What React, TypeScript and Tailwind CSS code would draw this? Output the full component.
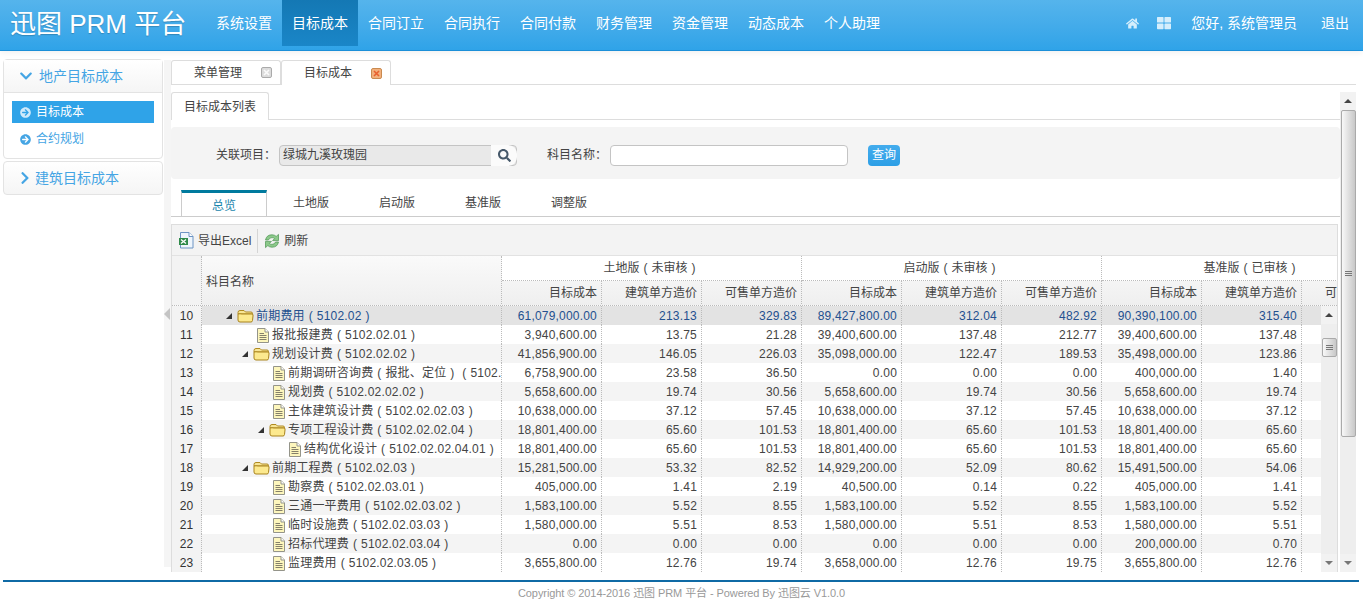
import { FaHome, FaThLarge, FaChevronDown, FaChevronRight, FaArrowCircleRight, FaSearch } from "react-icons/fa";

const font = { fontFamily: '"Liberation Sans", "Noto Sans CJK SC", sans-serif' };

type Row = { n: number; name: string; note?: string; code: string; level: number; folder?: boolean; v: string[] };

const rows: Row[] = [
  { n: 10, name: "前期费用", code: "5102.02", level: 0, folder: true, v: ["61,079,000.00", "213.13", "329.83", "89,427,800.00", "312.04", "482.92", "90,390,100.00", "315.40"] },
  { n: 11, name: "报批报建费", code: "5102.02.01", level: 1, v: ["3,940,600.00", "13.75", "21.28", "39,400,600.00", "137.48", "212.77", "39,400,600.00", "137.48"] },
  { n: 12, name: "规划设计费", code: "5102.02.02", level: 1, folder: true, v: ["41,856,900.00", "146.05", "226.03", "35,098,000.00", "122.47", "189.53", "35,498,000.00", "123.86"] },
  { n: 13, name: "前期调研咨询费", note: "报批、定位", code: "5102.02.02.01", level: 2, v: ["6,758,900.00", "23.58", "36.50", "0.00", "0.00", "0.00", "400,000.00", "1.40"] },
  { n: 14, name: "规划费", code: "5102.02.02.02", level: 2, v: ["5,658,600.00", "19.74", "30.56", "5,658,600.00", "19.74", "30.56", "5,658,600.00", "19.74"] },
  { n: 15, name: "主体建筑设计费", code: "5102.02.02.03", level: 2, v: ["10,638,000.00", "37.12", "57.45", "10,638,000.00", "37.12", "57.45", "10,638,000.00", "37.12"] },
  { n: 16, name: "专项工程设计费", code: "5102.02.02.04", level: 2, folder: true, v: ["18,801,400.00", "65.60", "101.53", "18,801,400.00", "65.60", "101.53", "18,801,400.00", "65.60"] },
  { n: 17, name: "结构优化设计", code: "5102.02.02.04.01", level: 3, v: ["18,801,400.00", "65.60", "101.53", "18,801,400.00", "65.60", "101.53", "18,801,400.00", "65.60"] },
  { n: 18, name: "前期工程费", code: "5102.02.03", level: 1, folder: true, v: ["15,281,500.00", "53.32", "82.52", "14,929,200.00", "52.09", "80.62", "15,491,500.00", "54.06"] },
  { n: 19, name: "勘察费", code: "5102.02.03.01", level: 2, v: ["405,000.00", "1.41", "2.19", "40,500.00", "0.14", "0.22", "405,000.00", "1.41"] },
  { n: 20, name: "三通一平费用", code: "5102.02.03.02", level: 2, v: ["1,583,100.00", "5.52", "8.55", "1,583,100.00", "5.52", "8.55", "1,583,100.00", "5.52"] },
  { n: 21, name: "临时设施费", code: "5102.02.03.03", level: 2, v: ["1,580,000.00", "5.51", "8.53", "1,580,000.00", "5.51", "8.53", "1,580,000.00", "5.51"] },
  { n: 22, name: "招标代理费", code: "5102.02.03.04", level: 2, v: ["0.00", "0.00", "0.00", "0.00", "0.00", "0.00", "200,000.00", "0.70"] },
  { n: 23, name: "监理费用", code: "5102.02.03.05", level: 2, v: ["3,655,800.00", "12.76", "19.74", "3,658,000.00", "12.76", "19.75", "3,655,800.00", "12.76"] },
];

const nav = ["系统设置", "目标成本", "合同订立", "合同执行", "合同付款", "财务管理", "资金管理", "动态成本", "个人助理"];

function Paren({ c }: { c: string }) {
  return <span className="inline-block w-3 shrink-0 text-center">{c}</span>;
}

function FolderIcon() {
  return (
    <svg width="17" height="14" viewBox="0 0 17 14" className="shrink-0">
      <path d="M1 3.5 Q1 1.5 3 1.5 H7 L8.5 3 H14 Q15.5 3 15.5 4.5 V5 H1Z" fill="#f7e596" stroke="#b08a20" strokeWidth="1" />
      <path d="M1 5 Q3 4.5 5 5 H15 Q16.5 5 16 7 L15.5 11.5 Q15.3 13 14 13 H3 Q1 13 1 11Z" fill="#fce98e" stroke="#a9831c" strokeWidth="1" />
    </svg>
  );
}

function DocIcon() {
  return (
    <svg width="13" height="15" viewBox="0 0 13 15" className="shrink-0">
      <path d="M1.5 0.5 H9 L12.5 4 V14.5 H1.5Z" fill="#fdf6bc" stroke="#94948a" strokeWidth="1" />
      <path d="M9 0.5 V4 H12.5" fill="#fff" stroke="#94948a" strokeWidth="1" />
      <path d="M3.5 5.5 H8 M3.5 7.5 H10.5 M3.5 9.5 H10.5 M3.5 11.5 H10.5" stroke="#85806a" strokeWidth="1" />
    </svg>
  );
}

function ExcelIcon() {
  return (
    <svg width="16" height="17" viewBox="0 0 16 17" className="shrink-0">
      <path d="M2.5 0.5 H11 L15 4.5 V16 H2.5Z" fill="#eef5fc" stroke="#6c94c4" strokeWidth="1" />
      <path d="M11 0.5 V4.5 H15" fill="#fff" stroke="#6c94c4" strokeWidth="1" />
      <path d="M1 6 H10 V13 H1Z" fill="#2f8a4a" />
      <path d="M3 7.5 L8 11.5 M8 7.5 L3 11.5" stroke="#fff" strokeWidth="1.3" />
    </svg>
  );
}

function RefreshIcon() {
  return (
    <svg width="16" height="16" viewBox="0 0 16 16" className="shrink-0">
      <path d="M1.5 7 Q2.5 1.8 8 1.8 Q10.6 1.8 12.2 3.4 L14.5 1.4 V7.6 H8.6 L10.6 5.6 Q9.5 4.6 8 4.6 Q5.4 4.6 4.4 7Z" fill="#8cc98a" stroke="#4a9350" strokeWidth="0.7" />
      <path d="M14.5 9 Q13.5 14.2 8 14.2 Q5.4 14.2 3.8 12.6 L1.5 14.6 V8.4 H7.4 L5.4 10.4 Q6.5 11.4 8 11.4 Q10.6 11.4 11.6 9Z" fill="#8cc98a" stroke="#4a9350" strokeWidth="0.7" />
    </svg>
  );
}

function Close({ active }: { active?: boolean }) {
  return (
    <svg width="11" height="11" viewBox="0 0 11 11" className="shrink-0">
      <rect x="0.5" y="0.5" width="10" height="10" rx="1.5" fill={active ? "#f2b07c" : "#dcdcdc"} stroke={active ? "#c98a50" : "#aaaaaa"} />
      <path d="M3 3 L8 8 M8 3 L3 8" stroke={active ? "#e8602e" : "#fafafa"} strokeWidth="1.6" />
    </svg>
  );
}

function ScrollBar({ thumbTop, thumbHeight }: { thumbTop: string; thumbHeight: string }) {
  return (
    <div className="flex h-full w-[16px] shrink-0 flex-col bg-[#eeeeee]">
      <div className="flex h-[18px] shrink-0 items-center justify-center bg-[#f2f2f2]">
        <div className="h-0 w-0 border-x-[4px] border-b-[4px] border-x-transparent border-b-[#444]" />
      </div>
      <div className="flex-1">
        <div className={`${thumbTop} ${thumbHeight} mx-auto flex w-[15px] flex-col items-center justify-center gap-[1px] rounded-[2px] border border-[#aaa] bg-gradient-to-r from-[#f8f8f8] to-[#c8c8c8]`}>
          <div className="h-px w-[7px] bg-[#777]" />
          <div className="h-px w-[7px] bg-[#777]" />
          <div className="h-px w-[7px] bg-[#777]" />
        </div>
      </div>
      <div className="flex h-[18px] shrink-0 items-center justify-center bg-[#f2f2f2]">
        <div className="h-0 w-0 border-x-[4px] border-t-[4px] border-x-transparent border-t-[#777]" />
      </div>
    </div>
  );
}

function GroupHead({ title, status }: { title: string; status: string }) {
  return (
    <div className="col-span-3 flex h-[25px] items-center justify-center border-r border-b border-dotted border-[#bbb] bg-white pb-[1px] text-[12px] text-[#444]">
      {title}
      <Paren c="(" />
      {status}
      <Paren c=")" />
    </div>
  );
}

function SubHead({ t }: { t: string }) {
  return (
    <div className="flex h-[25px] items-center justify-end whitespace-nowrap border-r border-dotted border-[#bbb] pb-[1px] pr-[4px] text-[12px] text-[#444]">
      {t}
    </div>
  );
}

export default function App() {
  return (
    <div className="flex h-[605px] w-full flex-col overflow-hidden bg-white" style={font}>
      <header className="flex h-[51px] shrink-0 items-start border-b border-[#1b8fd8] bg-gradient-to-b from-[#55b4ec] to-[#2fa3e8] text-white shadow-[0_2px_6px_rgba(0,0,0,0.06)]">
        <div className="w-[206px] shrink-0 pl-[10px] pt-[7px] text-[26px] leading-[34px] [text-shadow:0_1px_1px_rgba(0,0,0,0.2)]">迅图 PRM 平台</div>
        <nav className="flex">
          {nav.map((t) => (
            <div key={t} className={`flex h-[46px] w-[76px] items-center justify-center text-[14px] ${t === "目标成本" ? "bg-gradient-to-b from-[#1478b4] to-[#1a86c8]" : ""}`}>
              {t}
            </div>
          ))}
        </nav>
        <div className="ml-auto flex h-[46px] items-center pr-[14px] text-[14px]">
          <FaHome className="mr-[18px] text-[13px] text-[#d5eefc]" />
          <FaThLarge className="mr-[20px] text-[14px] text-[#d5eefc]" />
          <span className="mr-[24px]">您好, 系统管理员</span>
          <span>退出</span>
        </div>
      </header>

      <div className="flex min-h-0 flex-1">
        <aside className="ml-[3px] w-[160px] shrink-0 pt-[8px] text-[#45a5e4]">
          <div className="rounded-[4px] border border-[#e3e3e3]">
            <div className="flex h-[33px] items-center border-b border-[#e3e3e3] bg-gradient-to-b from-white to-[#f5f5f5] pl-[15px] text-[14px]">
              <FaChevronDown className="mr-[6px] text-[14px]" />
              地产目标成本
            </div>
            <div className="px-[8px] pb-[8px] pt-[8px] text-[12px]">
              <div className="flex h-[22px] items-center bg-[#2fa3e8] pl-[8px] text-white">
                <FaArrowCircleRight className="mr-[5px] text-[11px] text-[#cfeafb]" />
                目标成本
              </div>
              <div className="mt-[5px] flex h-[22px] items-center pl-[8px]">
                <FaArrowCircleRight className="mr-[5px] text-[11px]" />
                合约规划
              </div>
            </div>
          </div>
          <div className="mt-[2px] flex h-[34px] items-center rounded-[4px] border border-[#e3e3e3] bg-gradient-to-b from-white to-[#f5f5f5] pl-[14px] text-[14px]">
            <FaChevronRight className="mr-[3px] text-[14px]" />
            建筑目标成本
          </div>
        </aside>

        <div className="mb-[5px] ml-[1px] mt-[9px] flex w-[7px] shrink-0 items-center bg-[#f5f5f5]">
          <div className="h-0 w-0 border-y-[6px] border-r-[6px] border-y-transparent border-r-[#c4c4c4]" />
        </div>

        <main className="flex min-w-0 flex-1 flex-col pr-[7px] pt-[9px] text-[12px] text-[#444]">
          <div className="flex h-[25px] shrink-0 items-end border-b border-[#ddd]">
            <div className="flex h-[24px] w-[110px] items-center justify-between rounded-t-[3px] border border-b-0 border-[#ddd] pl-[22px] pr-[8px]">
              <span>菜单管理</span>
              <Close />
            </div>
            <div className="-mb-px flex h-[25px] w-[110px] items-center justify-between rounded-t-[3px] border border-b-0 border-[#ddd] bg-white pl-[22px] pr-[8px]">
              <span>目标成本</span>
              <Close active />
            </div>
          </div>

          <div className="flex min-h-0 flex-1 pt-[7px]">
            <div className="flex min-w-0 flex-1 flex-col overflow-hidden">
              <div className="flex h-[28px] shrink-0 items-end border-b border-[#ddd]">
                <div className="-mb-px flex h-[28px] w-[98px] items-center justify-center rounded-t-[3px] border border-b-0 border-[#ddd] bg-white">目标成本列表</div>
              </div>

              <div className="mt-[7px] flex h-[52px] shrink-0 items-center rounded-[4px] bg-[#f4f4f4] pl-[45px] pt-[4px]">
                <span className="w-[63px] shrink-0">关联项目：</span>
                <div className="flex h-[21px] w-[238px] shrink-0 rounded-[4px] border border-[#c4c4c4] bg-[#e9e9e9]">
                  <div className="flex-1 pl-[3px] leading-[19px]">绿城九溪玫瑰园</div>
                  <div className="-my-px -mr-px flex w-[26px] items-center justify-center rounded-r-[9px] bg-[#fbfbfb] text-[#46586a]">
                    <FaSearch className="text-[13px]" />
                  </div>
                </div>
                <span className="ml-[30px] w-[63px] shrink-0">科目名称：</span>
                <div className="h-[21px] w-[238px] shrink-0 rounded-[4px] border border-[#c4c4c4] bg-white" />
                <button className="ml-[20px] h-[21px] w-[32px] rounded-[4px] bg-gradient-to-b from-[#43aced] to-[#2c9fe6] text-[12px] text-white">查询</button>
              </div>

              <div className="ml-[10px] mt-[11px] flex h-[26px] shrink-0">
                <div className="flex h-[27px] w-[86px] items-center justify-center border-x border-t-[3px] border-x-[#ccc] border-t-[#007a9e] bg-white pt-[2px] text-[#1a86ad]">总览</div>
                {["土地版", "启动版", "基准版", "调整版"].map((t) => (
                  <div key={t} className="flex w-[86px] items-center justify-center pl-[2px]">{t}</div>
                ))}
              </div>
              <div className="h-px shrink-0 bg-[#ccc]" />

              <div className="mr-[2px] mt-[7px] flex min-h-0 flex-1 flex-col overflow-hidden border-x border-t border-[#ddd]">
                <div className="flex h-[31px] shrink-0 items-center border-b border-[#e2e2e2] bg-[#f3f3f3] pl-[6px] pt-[1px]">
                  <ExcelIcon />
                  <span className="ml-[4px]">导出Excel</span>
                  <div className="mx-[6px] h-[24px] w-px bg-[#d5d5d5]" />
                  <RefreshIcon />
                  <span className="ml-[4px]">刷新</span>
                </div>

                <div className="h-[50px] shrink-0 overflow-hidden border-b border-dotted border-[#bbb] bg-gradient-to-b from-[#fafafa] to-[#efefef]">
                  <div className="grid w-[1230px] grid-cols-[30px_300px_repeat(9,100px)] grid-rows-[25px_25px]">
                    <div className="row-span-2 border-r border-dotted border-[#bbb] bg-[#f3f3f3]" />
                    <div className="row-span-2 flex items-center border-r border-dotted border-[#bbb] pl-[4px] pt-[1px]">科目名称</div>
                    <GroupHead title="土地版" status="未审核" />
                    <GroupHead title="启动版" status="未审核" />
                    <GroupHead title="基准版" status="已审核" />
                    {["目标成本", "建筑单方造价", "可售单方造价", "目标成本", "建筑单方造价", "可售单方造价", "目标成本", "建筑单方造价", "可售单方造价"].map((t, i) => (
                      <SubHead key={i} t={t} />
                    ))}
                  </div>
                </div>

                <div className="flex min-h-0 flex-1">
                  <div className="min-w-0 flex-1 overflow-hidden">
                    {rows.map((r) => {
                      const first = r.n === 10;
                      const bg = first ? "bg-[#e3e3e3]" : r.n % 2 === 0 ? "bg-[#f4f4f4]" : "bg-white";
                      return (
                        <div key={r.n} className={`grid h-[19px] w-[1230px] grid-cols-[30px_300px_repeat(9,100px)] text-[12px] leading-[20px] tracking-[0.2px] ${first ? "text-[#24508f]" : "text-[#444]"}`}>
                          <div className="border-r border-b border-dotted border-[#bbb] bg-[#f3f3f3] text-center text-[#333]">{r.n}</div>
                          <div className={`flex items-center overflow-hidden whitespace-nowrap border-r border-b border-dotted border-[#bbb] ${bg}`} style={{ paddingLeft: 54 + r.level * 16 - (r.folder ? 30 : 16) }}>
                            {r.folder ? (
                              <>
                                <div className="mr-[5px] h-0 w-0 shrink-0 border-b-[6px] border-l-[6px] border-b-[#333] border-l-transparent" />
                                <FolderIcon />
                                <span className="w-[2px] shrink-0" />
                              </>
                            ) : (
                              <>
                                <DocIcon />
                                <span className="w-[3px] shrink-0" />
                              </>
                            )}
                            <span className="shrink-0">{r.name}</span>
                            {r.note ? (
                              <>
                                <Paren c="(" />
                                <span className="shrink-0">{r.note}</span>
                                <Paren c=")" />
                              </>
                            ) : null}
                            <Paren c="(" />
                            <span className="shrink-0">{r.code}</span>
                            <Paren c=")" />
                          </div>
                          {Array.from({ length: 9 }).map((_, i) => (
                            <div key={i} className={`border-r border-b border-dotted border-[#bbb] pr-[4px] text-right ${bg}`}>{r.v[i] ?? ""}</div>
                          ))}
                        </div>
                      );
                    })}
                  </div>
                  <ScrollBar thumbTop="mt-[14px]" thumbHeight="h-[19px]" />
                </div>
              </div>
            </div>
            <ScrollBar thumbTop="mt-[0px]" thumbHeight="h-[327px]" />
          </div>
        </main>
      </div>

      <footer className="shrink-0 pb-[3px] pt-[8px]">
        <div className="ml-[3px] mr-[4px] h-[2px] bg-[#0f6aa5]" />
        <div className="pt-[3px] text-center text-[11px] leading-[17px] tracking-[-0.08px] text-[#999]">Copyright © 2014-2016 迅图 PRM 平台 - Powered By 迅图云 V1.0.0</div>
      </footer>
    </div>
  );
}
